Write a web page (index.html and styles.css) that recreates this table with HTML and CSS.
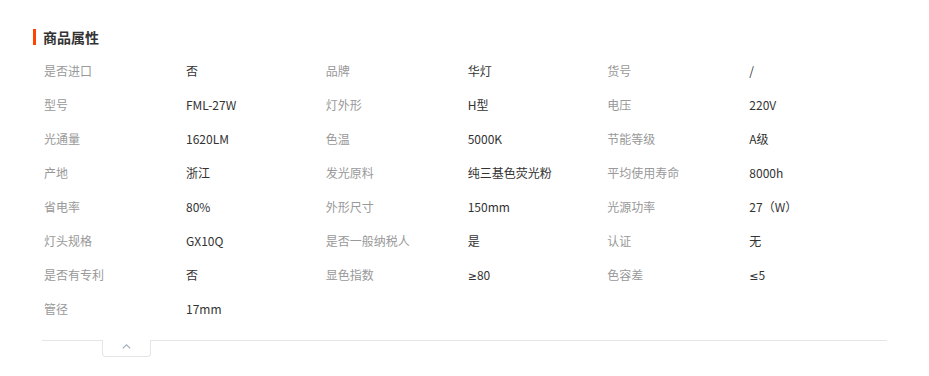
FILE: index.html
```html
<!DOCTYPE html>
<html lang="zh-CN">
<head>
<meta charset="utf-8">
<title>商品属性</title>
<link rel="stylesheet" href="styles.css">
</head>
<body>
<section class="attrs">
  <h2 class="attrs-title">商品属性</h2>
  <div class="attrs-body">
    <ul class="attr-grid">
      <li class="attr"><span class="attr-label">是否进口</span><span class="attr-value">否</span></li>
      <li class="attr"><span class="attr-label">品牌</span><span class="attr-value">华灯</span></li>
      <li class="attr"><span class="attr-label">货号</span><span class="attr-value">/</span></li>
      <li class="attr"><span class="attr-label">型号</span><span class="attr-value">FML-27W</span></li>
      <li class="attr"><span class="attr-label">灯外形</span><span class="attr-value">H型</span></li>
      <li class="attr"><span class="attr-label">电压</span><span class="attr-value">220V</span></li>
      <li class="attr"><span class="attr-label">光通量</span><span class="attr-value">1620LM</span></li>
      <li class="attr"><span class="attr-label">色温</span><span class="attr-value">5000K</span></li>
      <li class="attr"><span class="attr-label">节能等级</span><span class="attr-value">A级</span></li>
      <li class="attr"><span class="attr-label">产地</span><span class="attr-value">浙江</span></li>
      <li class="attr"><span class="attr-label">发光原料</span><span class="attr-value">纯三基色荧光粉</span></li>
      <li class="attr"><span class="attr-label">平均使用寿命</span><span class="attr-value">8000h</span></li>
      <li class="attr"><span class="attr-label">省电率</span><span class="attr-value">80%</span></li>
      <li class="attr"><span class="attr-label">外形尺寸</span><span class="attr-value">150mm</span></li>
      <li class="attr"><span class="attr-label">光源功率</span><span class="attr-value">27（W）</span></li>
      <li class="attr"><span class="attr-label">灯头规格</span><span class="attr-value">GX10Q</span></li>
      <li class="attr"><span class="attr-label">是否一般纳税人</span><span class="attr-value">是</span></li>
      <li class="attr"><span class="attr-label">认证</span><span class="attr-value">无</span></li>
      <li class="attr"><span class="attr-label">是否有专利</span><span class="attr-value">否</span></li>
      <li class="attr"><span class="attr-label">显色指数</span><span class="attr-value"><span class="sym">≥</span>80</span></li>
      <li class="attr"><span class="attr-label">色容差</span><span class="attr-value"><span class="sym">≤</span>5</span></li>
      <li class="attr"><span class="attr-label">管径</span><span class="attr-value">17mm</span></li>
    </ul>
    <div class="attrs-foot">
      <button class="collapse-tab" type="button" aria-label="收起">
        <svg class="chev" width="9" height="5" viewBox="0 0 9 5"><path d="M0.8 4.4 L4.5 0.9 L8.2 4.4" fill="none" stroke="#a3acbd" stroke-width="1.2"/></svg>
      </button>
    </div>
  </div>
</section>
</body>
</html>
```
FILE: styles.css
```css
html, body {
  margin: 0;
  padding: 0;
  background: #fff;
}
body {
  font-family: "Noto Sans CJK SC", "Noto Sans", sans-serif;
  font-size: 12px;
  color: #333;
}
.attrs {
  padding: 29px 0 0 33px;
  width: 854px;
}
.attrs-title {
  margin: 0;
  font-size: 14px;
  font-weight: bold;
  line-height: 16px;
  color: #333;
  border-left: 3px solid #ff4400;
  padding-left: 7px;
  height: 16px;
  display: flex;
  align-items: center;
}
.attrs-body {
  margin-left: 9px;
  padding-top: 8px;
}
.attr-grid {
  list-style: none;
  margin: 0;
  padding: 0;
  display: grid;
  grid-template-columns: repeat(3, 1fr);
}
.attr {
  display: flex;
  align-items: center;
  height: 34px;
  padding-left: 2px;
}
.attr-label {
  width: 142px;
  color: #999;
  flex: none;
}
.attr-value {
  color: #333;
}
.sym {
  font-family: "DejaVu Sans", sans-serif;
  font-size: 11px;
}
.attrs-foot {
  margin-top: 15px;
  border-top: 1px solid #e5e5e5;
  padding-left: 60px;
}
.collapse-tab {
  display: flex;
  align-items: flex-start;
  justify-content: center;
  margin: -1px 0 0 0;
  padding: 4px 0 0 0;
  width: 49px;
  height: 17px;
  background: #fff;
  border: 1px solid #e5e5e5;
  border-top: none;
  border-radius: 0 0 4px 4px;
  box-sizing: border-box;
  cursor: pointer;
}
.chev {
  display: block;
}
```
